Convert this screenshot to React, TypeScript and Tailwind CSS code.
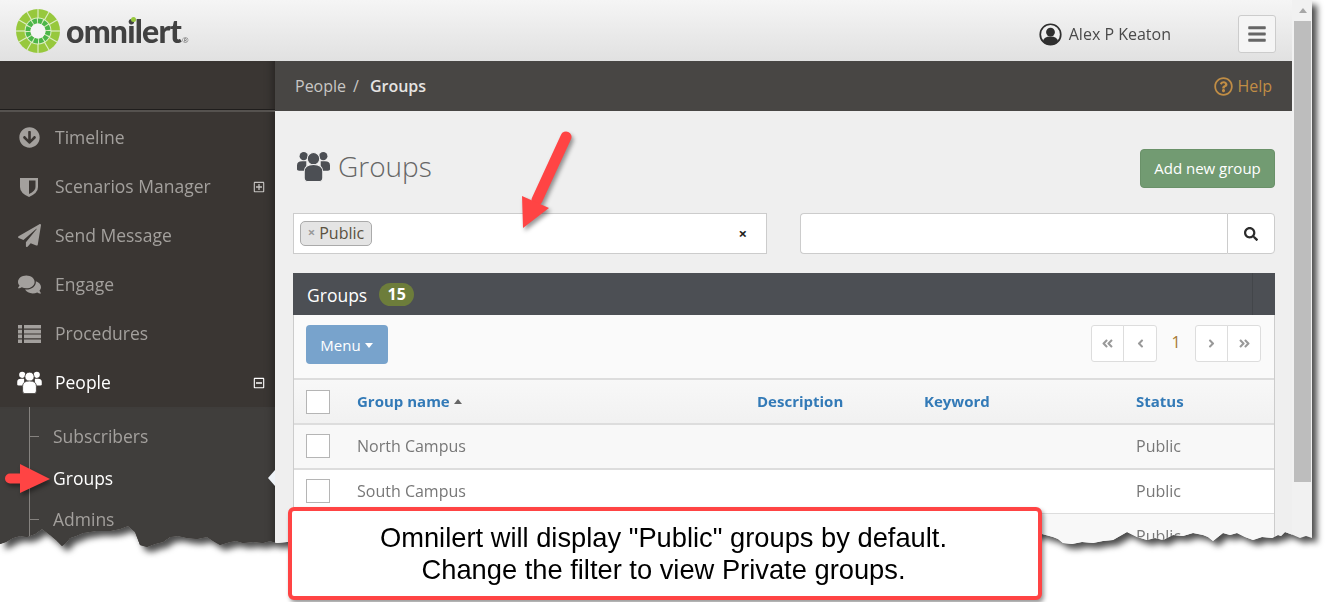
import React from 'react';
import {
  FaArrowCircleDown, FaPaperPlane, FaComments, FaRegPlusSquare, FaRegMinusSquare,
  FaRegQuestionCircle, FaSearch, FaBars, FaAngleDoubleLeft, FaAngleDoubleRight, FaAngleLeft, FaAngleRight,
} from 'react-icons/fa';

function UsersIcon({ className, gap }: { className: string; gap: string }) {
  return (
    <svg viewBox="0 0 32 30" className={className} fill="currentColor">
      <circle cx="6.5" cy="5" r="4" />
      <circle cx="25.5" cy="5" r="4" />
      <path d="M0 18v-4q0-4 5-4h4v9H2q-2 0-2-1zM32 18v-4q0-4-5-4h-4v9h7q2 0 2-1z" />
      <circle cx="16" cy="7.5" r="6" stroke={gap} strokeWidth="1" />
      <path d="M7 26v-6q0-7 9-7t9 7v6q0 3.500-3 3.500H10q-3 0-3-3.500z" stroke={gap} strokeWidth="1" />
    </svg>
  );
}

function ShieldIcon() {
  return (
    <svg viewBox="0 0 18 20" className="h-[20px] w-[18px] text-[#a3a09d]">
      <path d="M0 1h18v9q0 6-9 10-9-4-9-10z" fill="currentColor" />
      <path d="M9 3.500h6.500V10q0 4-6.500 7z" fill="#3a3633" />
    </svg>
  );
}

function ListIcon() {
  return (
    <svg viewBox="0 0 23 18" className="h-[18px] w-[23px]" fill="currentColor">
      <path d="M0 0h4v3.600H0zM6 0h17v3.600H6zM0 4.800h4v3.600H0zM6 4.800h17v3.600H6zM0 9.600h4v3.600H0zM6 9.600h17v3.600H6zM0 14.400h4V18H0zM6 14.400h17V18H6z" />
    </svg>
  );
}

const logoSpokes = [0, 30, 60, 90, 120, 150, 180, 210, 240, 270, 300, 330];

function Logo() {
  return (
    <div className="flex items-center">
      <svg viewBox="0 0 44 44" className="h-[44px] w-[44px]">
        <circle cx="22" cy="22" r="22" fill="#97c83d" />
        {logoSpokes.map((a) => (
          <line key={a} x1="22" y1="22" x2="22" y2="0" stroke="#dcedc4" strokeWidth="1.200" transform={`rotate(${a} 22 22)`} />
        ))}
        <circle cx="22" cy="22" r="13.500" fill="#dcedc4" />
        <circle cx="22" cy="22" r="10" fill="none" stroke="#4cb649" strokeWidth="5" strokeDasharray="4.200 1" />
        <circle cx="22" cy="22" r="7.500" fill="#f4f4f4" />
      </svg>
      <div className="relative ml-[6px] flex items-start text-[#414141]">
        <span className="[font-family:'Lato',sans-serif] text-[32px] leading-[40px] font-black tracking-[-0.8px]">omnilert</span>
        <span className="absolute top-[6px] left-[65px] h-[5px] w-[5px] rounded-full bg-[#97c83d]" />
        <span className="mt-[24px] ml-[1px] text-[8px] leading-[10px] text-[#666]">®</span>
      </div>
    </div>
  );
}

function UserAvatar() {
  return (
    <svg viewBox="0 0 24 24" className="h-[23px] w-[23px]">
      <circle cx="12" cy="12" r="10.700" fill="#f0f0f0" stroke="#2f2f2f" strokeWidth="1.800" />
      <circle cx="12" cy="9.500" r="4.600" fill="#2f2f2f" />
      <path d="M4 19q1-5 8-5t8 5q-3 4-8 4t-8-4z" fill="#2f2f2f" />
    </svg>
  );
}

const navItems = [
  { label: 'Timeline', icon: <FaArrowCircleDown className="h-[21px] w-[21px]" /> },
  { label: 'Scenarios Manager', icon: <ShieldIcon />, toggle: 'plus' },
  { label: 'Send Message', icon: <FaPaperPlane className="h-[23px] w-[23px]" /> },
  { label: 'Engage', icon: <FaComments className="h-[23px] w-[23px]" /> },
  { label: 'Procedures', icon: <ListIcon /> },
  { label: 'People', icon: <UsersIcon className="h-[23px] w-[25px]" gap="#3a3633" />, toggle: 'minus', active: true },
];

const subItems = [
  { label: 'Subscribers', h: 'h-[41px]' },
  { label: 'Groups', active: true, h: 'h-[42px]' },
  { label: 'Admins', h: 'h-[41px]' },
];

function Sidebar() {
  return (
    <aside className="flex w-[275px] shrink-0 flex-col bg-[#3a3633] shadow-[inset_-9px_0_8px_-7px_rgba(0,0,0,0.35)]">
      <div className="h-[49px] border-b border-[#1f1d1c]" />
      <div className="h-[2px] bg-[#55524f]" />
      <nav className="flex flex-col pt-[1px]">
        {navItems.map((item) => (
          <div key={item.label} className={`flex h-[49px] items-center pr-[10px] ${item.active ? 'text-white' : 'text-[#a3a09d]'}`}>
            <div className="flex w-[55px] shrink-0 justify-center pl-[3px]">{item.icon}</div>
            <span className="flex-1 text-[17.500px]">{item.label}</span>
            {item.toggle === 'plus' && <FaRegPlusSquare className="h-[12px] w-[12px] text-[#c4c2c0]" />}
            {item.toggle === 'minus' && <FaRegMinusSquare className="h-[12px] w-[12px] text-white" />}
          </div>
        ))}
      </nav>
      <div className="relative flex flex-1 flex-col bg-[#403e3c] pt-[9px] shadow-[inset_-9px_0_8px_-7px_rgba(0,0,0,0.3)]">
        <div className="absolute top-0 bottom-0 left-[29px] w-px bg-[#85827f]" />
        {subItems.map((s) => (
          <div key={s.label} className={`relative flex items-center pl-[53px] text-[17.500px] ${s.h} ${s.active ? 'text-white' : 'text-[#a3a09d]'}`}>
            {!s.active && <span className="absolute top-[20px] left-[30px] h-px w-[9px] bg-[#85827f]" />}
            {s.label}
            {s.active && (
              <span className="absolute top-[13px] right-0 h-0 w-0 border-y-[8px] border-r-[7px] border-y-transparent border-r-[#eef3f8]" />
            )}
          </div>
        ))}
      </div>
    </aside>
  );
}

function PageButton({ children, className }: { children: React.ReactNode; className: string }) {
  return (
    <div className={`flex h-[37px] items-center justify-center border border-[#ddd] bg-white text-[#999] ${className}`}>{children}</div>
  );
}

const rows = [
  { name: 'North Campus', bg: 'bg-[#f8f8f8]', border: 'h-[45px] border-b-2 pb-[2px]' },
  { name: 'South Campus', bg: 'bg-white', border: 'h-[44px] border-b pb-[1px]' },
  { name: '', bg: 'bg-[#f8f8f8]', border: 'h-[45px] pb-[2px]' },
];

function GroupsTable() {
  return (
    <div>
      <div className="grid h-[47px] grid-cols-[63px_400px_167px_212px_1fr] items-center border-t-2 border-b-2 border-[#ddd] bg-linear-to-b from-[#f8f8f8] to-[#f1f1f1] text-[15px] font-bold text-[#337ab7]">
        <span className="ml-[12px] h-[24px] w-[24px] border border-[#b5b5b5] bg-white" />
        <span className="flex items-center">
          Group name
          <span className="ml-[4px] h-0 w-0 border-x-[4.500px] border-b-[5px] border-x-transparent border-b-[#666]" />
        </span>
        <span>Description</span>
        <span>Keyword</span>
        <span>Status</span>
      </div>
      {rows.map((r, i) => (
        <div key={i} className={`grid grid-cols-[63px_400px_167px_212px_1fr] items-center border-[#ddd] text-[16px] text-[#777] ${r.bg} ${r.border}`}>
          <span className="ml-[12px] h-[24px] w-[24px] border border-[#b5b5b5] bg-white" />
          <span>{r.name}</span>
          <span />
          <span />
          <span>Public</span>
        </div>
      ))}
    </div>
  );
}

function Content() {
  return (
    <main className="flex min-w-0 flex-1 flex-col">
      <div className="flex h-[50px] shrink-0 items-center justify-between bg-[#484644] pr-[20px] pl-[20px] text-[16px]">
        <div className="text-[#c9c7c5]">
          People<span className="ml-[7px]">/</span><span className="ml-[11px] font-semibold text-[#e6e4e2]">Groups</span>
        </div>
        <div className="flex items-center text-[#c08d45]">
          <FaRegQuestionCircle className="mr-[4px] h-[19px] w-[19px]" />
          Help
        </div>
      </div>
      <div className="flex-1 bg-[#efefef] pr-[17px] pl-[18px]">
        <div className="flex items-start justify-between pt-[38px]">
          <div className="flex items-center pl-[4px] text-[#4c4f54]">
            <UsersIcon className="h-[31px] w-[33px]" gap="#efefef" />
            <span className="ml-[8px] text-[28px] leading-[34px] font-light text-[#666]">Groups</span>
          </div>
          <div className="flex h-[39px] w-[135px] items-center justify-center rounded-[4px] border border-[#6a9169] bg-[#729b72] text-[15px] text-white">
            Add new group
          </div>
        </div>
        <div className="mt-[25px] flex gap-[33px]">
          <div className="flex h-[41px] w-[474px] items-center justify-between border border-[#ccc] bg-white pr-[19px] pl-[6px]">
            <span className="flex h-[25px] w-[72px] items-center justify-center rounded-[5px] border border-[#aaa] bg-[#e4e4e4] pb-[1px] text-[16px] text-[#5a5140]">
              <span className="mr-[4px] text-[13px] font-bold text-[#999]">×</span>Public
            </span>
            <span className="text-[15px] leading-none font-bold text-[#222]">×</span>
          </div>
          <div className="flex h-[41px] flex-1">
            <div className="flex-1 rounded-l-[4px] border border-r-0 border-[#ccc] bg-white" />
            <div className="flex w-[48px] items-center justify-center rounded-r-[4px] border border-[#ccc] bg-white text-[#2b2b2b]">
              <FaSearch className="h-[14px] w-[14px]" />
            </div>
          </div>
        </div>
        <section className="mt-[19px]">
          <div className="flex h-[42px] items-center bg-[#4c4f54] pl-[14px] text-white">
            <span className="pt-[2px] text-[17.500px]">Groups</span>
            <span className="ml-[12px] flex h-[23px] w-[35px] items-center justify-center rounded-full bg-[#6d7d3b] text-[16px] font-bold">15</span>
            <span className="ml-auto mr-[22px] h-full w-px bg-[#43464a]" />
          </div>
          <div className="border-x border-[#ccc] bg-[#fafafa]">
            <div className="flex h-[63px] items-start justify-between pt-[10px] pr-[13px] pl-[12px]">
              <div className="flex h-[39px] w-[82px] items-center justify-center rounded-[4px] bg-[#78a3cc] pt-[1px] pr-[1px] text-[15px] text-white">
                Menu
                <span className="ml-[4px] h-0 w-0 border-x-[4.500px] border-t-[5px] border-x-transparent border-t-white" />
              </div>
              <div className="flex items-start">
                <PageButton className="w-[33px] rounded-l-[3px]"><FaAngleDoubleLeft className="h-[13px] w-[13px]" /></PageButton>
                <PageButton className="ml-[-1px] w-[34px] rounded-r-[3px]"><FaAngleLeft className="h-[13px] w-[13px]" /></PageButton>
                <span className="w-[38px] pt-[5px] text-center text-[16px] text-[#a97a35]">1</span>
                <PageButton className="w-[33px] rounded-l-[3px]"><FaAngleRight className="h-[13px] w-[13px]" /></PageButton>
                <PageButton className="ml-[-1px] w-[34px] rounded-r-[3px]"><FaAngleDoubleRight className="h-[13px] w-[13px]" /></PageButton>
              </div>
            </div>
            <GroupsTable />
          </div>
        </section>
      </div>
    </main>
  );
}

export default function App() {
  return (
    <div className="relative h-[602px] w-[1328px] overflow-hidden bg-white [font-family:'Open_Sans',sans-serif]">
      {/* torn page edge: the shadow has to sit on a parent of the clipped window */}
      <div className="h-[560px] w-[1312px] [filter:drop-shadow(5px_5px_3px_rgba(0,0,0,0.7))]">
        <div className="flex h-full w-full flex-col bg-[#f1f1f1] [clip-path:polygon(0px_0px,1312px_0px,1312px_538px,1306px_536px,1300px_538px,1293px_535px,1285px_532px,1281px_536px,1278px_535px,1272px_538px,1262px_537px,1253px_540px,1245px_537px,1237px_533px,1230px_535px,1223px_533px,1218px_537px,1213px_541px,1208px_537px,1203px_535px,1193px_533px,1183px_536px,1173px_535px,1163px_540px,1155px_538px,1147px_540px,1137px_537px,1127px_532px,1120px_536px,1113px_540px,1103px_541px,1093px_543px,1082px_542px,1072px_544px,1063px_543px,1058px_539px,1053px_537px,1042px_534px,600px_540px,287px_542px,277px_543px,270px_541px,263px_543px,253px_542px,243px_543px,236px_541px,230px_542px,220px_545px,213px_541px,207px_537px,197px_539px,187px_538px,178px_536px,170px_537px,163px_542px,155px_544px,147px_547px,140px_545px,135px_532px,128px_526px,120px_529px,110px_531px,96px_531px,83px_533px,76px_536px,70px_538px,66px_543px,62px_546px,56px_540px,50px_535px,42px_529px,35px_534px,27px_537px,20px_536px,13px_538px,6px_542px,0px_544px)]">
          <div className="flex min-h-0 flex-1">
            <div className="flex w-[1292px] shrink-0 flex-col">
              <header className="flex h-[61px] shrink-0 items-center justify-between bg-linear-to-b from-[#f5f5f5] to-[#e1e1e1] pr-[16px] pl-[16px]">
                <Logo />
                <div className="mt-[7px] flex items-center">
                  <UserAvatar />
                  <span className="mr-[67px] ml-[7px] text-[16px] text-[#4a4a4a]">Alex P Keaton</span>
                  <div className="flex h-[38px] w-[38px] items-center justify-center rounded-[3px] border border-[#ccc] bg-[#f5f5f5] text-[#666]">
                    <FaBars className="h-[20px] w-[20px]" />
                  </div>
                </div>
              </header>
              <div className="flex min-h-0 flex-1">
                <Sidebar />
                <Content />
              </div>
            </div>
            <div className="w-[20px] pl-[2px]">
              <div className="flex h-[21px] items-center justify-center">
                <span className="h-0 w-0 border-x-[4.500px] border-b-[5px] border-x-transparent border-b-[#a6a6a6]" />
              </div>
              <div className="h-[461px] w-[17px] bg-[#bdbdbd]" />
            </div>
          </div>
        </div>
      </div>

      {/* annotations */}
      <svg viewBox="0 0 1328 602" className="pointer-events-none absolute inset-0 h-[602px] w-[1328px] [filter:drop-shadow(2px_3px_2px_rgba(0,0,0,0.4))]">
        <path d="M537 200L566 137" stroke="#ff4444" strokeWidth="11" strokeLinecap="round" fill="none" />
        <path d="M523 228L522 196L549 208z" fill="#ff4444" />
        <path d="M10 478.500H24" stroke="#ff4444" strokeWidth="10" strokeLinecap="round" fill="none" />
        <path d="M50 479L20 464V493z" fill="#ff4444" />
      </svg>
      <div className="absolute top-[507px] left-[288px] flex h-[93px] w-[754px] flex-col items-center justify-center rounded-[6px] border-[4px] border-[#ff4444] bg-white pr-[3px] [font-family:'Liberation_Sans',sans-serif] text-[27.300px] leading-[32px] text-black shadow-[2px_3px_4px_rgba(0,0,0,0.4)]">
        <span>Omnilert will display "Public" groups by default.</span>
        <span>Change the filter to view Private groups.</span>
      </div>
    </div>
  );
}
